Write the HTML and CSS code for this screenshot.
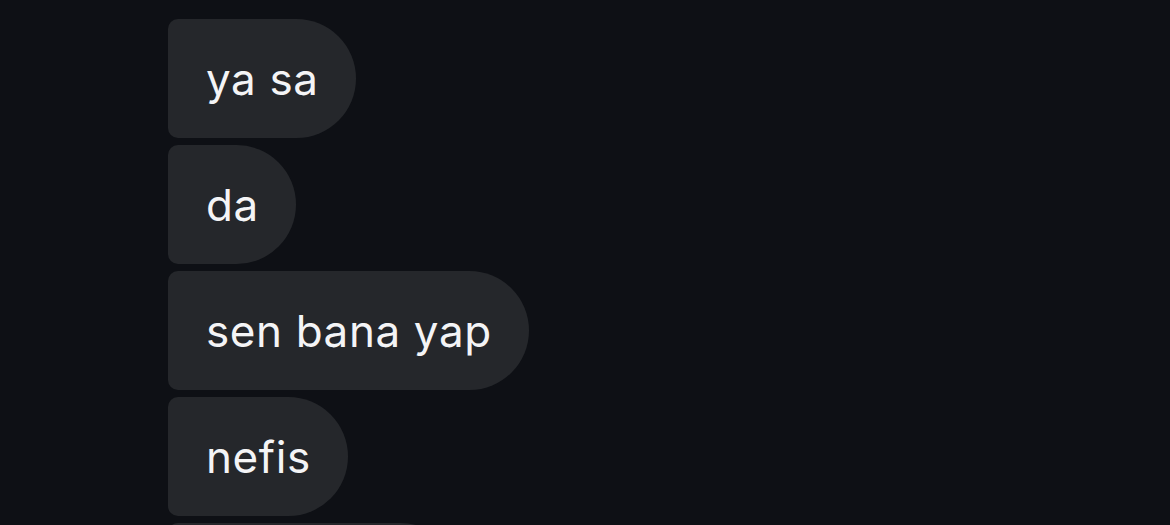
FILE: index.html
```html
<!DOCTYPE html>
<html lang="tr">
<head>
<meta charset="utf-8">
<link rel="stylesheet" href="styles.css">
</head>
<body>
<div class="thread">
  <div class="bubble">ya sa</div>
  <div class="bubble">da</div>
  <div class="bubble">sen bana yap</div>
  <div class="bubble">nefis</div>
  <div class="bubble bubble-wide"></div>
</div>
</body>
</html>
```
FILE: styles.css
```css
html, body {
  margin: 0;
  padding: 0;
  background: #0e1015;
  height: 100%;
  overflow: hidden;
}
.thread {
  display: flex;
  flex-direction: column;
  align-items: flex-start;
  gap: 7px;
  padding: 19px 0 0 168px;
}
.bubble {
  height: 119px;
  box-sizing: border-box;
  display: flex;
  align-items: center;
  padding: 0 37px 0 38px;
  background: #25272b;
  color: #f4f4f6;
  font-family: Inter, "Noto Sans", sans-serif;
  font-size: 44px;
  font-weight: 400;
  letter-spacing: 0.6px;
  border-radius: 10px 60px 60px 10px;
  white-space: nowrap;
  flex-shrink: 0;
}
.bubble-wide {
  width: 292px;
}
```
